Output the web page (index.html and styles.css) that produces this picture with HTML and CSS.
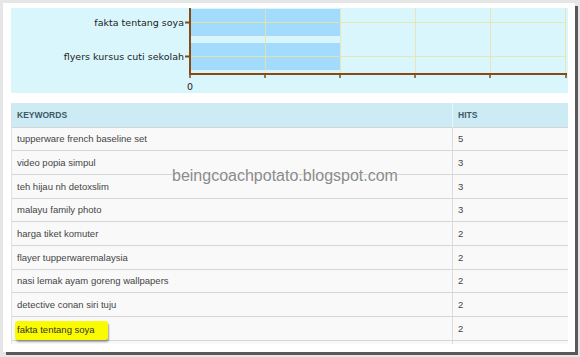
FILE: index.html
```html
<!DOCTYPE html>
<html lang="en">
<head>
  <meta charset="UTF-8" />
  <meta name="viewport" content="width=device-width, initial-scale=1.0"/>
  <title>Keywords report</title>
  <link rel="stylesheet" href="styles.css">
</head>
<body>

<div class="frame">

  <div class="chart">
    <svg viewBox="0 0 557 85" width="557" height="85">
      <!-- bars -->
      <rect class="bar" x="180" y="1" width="149" height="27" />
      <rect class="bar" x="180" y="35" width="149" height="27" />

      <!-- grid -->
      <g class="grid">
        <line x1="254.5" y1="0" x2="254.5" y2="65" />
        <line x1="329.5" y1="0" x2="329.5" y2="65" />
        <line x1="404.5" y1="0" x2="404.5" y2="65" />
        <line x1="479.5" y1="0" x2="479.5" y2="65" />
        <line x1="554.5" y1="0" x2="554.5" y2="65" />
        <line x1="180" y1="14.5" x2="555" y2="14.5" />
        <line x1="180" y1="48.5" x2="555" y2="48.5" />
      </g>

      <!-- axes -->
      <g class="axis">
        <line x1="179" y1="0" x2="179" y2="67" />
        <line x1="178" y1="66" x2="556" y2="66" />
        <line x1="174" y1="14.5" x2="179" y2="14.5" />
        <line x1="174" y1="48.5" x2="179" y2="48.5" />
      </g>
      <g class="ticks">
        <line x1="179" y1="66" x2="179" y2="70" />
        <line x1="254" y1="66" x2="254" y2="70" />
        <line x1="329" y1="66" x2="329" y2="70" />
        <line x1="404" y1="66" x2="404" y2="70" />
        <line x1="479" y1="66" x2="479" y2="70" />
        <line x1="555" y1="66" x2="555" y2="70" />
      </g>

      <text class="label" x="173" y="18">fakta tentang soya</text>
      <text class="label" x="173" y="52">flyers kursus cuti sekolah</text>
      <text class="label zero" x="179" y="82">0</text>
    </svg>
  </div>

  <div class="table-wrap">
    <table class="keywords">
      <thead>
        <tr><th>KEYWORDS</th><th class="hits">HITS</th></tr>
      </thead>
      <tbody>
        <tr><td>tupperware french baseline set</td><td class="hits">5</td></tr>
        <tr><td>video popia simpul</td><td class="hits">3</td></tr>
        <tr><td>teh hijau nh detoxslim</td><td class="hits">3</td></tr>
        <tr><td>malayu family photo</td><td class="hits">3</td></tr>
        <tr><td>harga tiket komuter</td><td class="hits">2</td></tr>
        <tr><td>flayer tupperwaremalaysia</td><td class="hits">2</td></tr>
        <tr><td>nasi lemak ayam goreng wallpapers</td><td class="hits">2</td></tr>
        <tr><td>detective conan siri tuju</td><td class="hits">2</td></tr>
        <tr><td><span class="marker">fakta tentang soya</span></td><td class="hits">2</td></tr>
        <tr><td>&nbsp;</td><td class="hits">&nbsp;</td></tr>
      </tbody>
    </table>
  </div>

  <div class="watermark">beingcoachpotato.blogspot.com</div>

</div>

</body>
</html>
```

FILE: styles.css
```css
* {
  margin: 0;
  padding: 0;
  box-sizing: border-box;
}

body {
  width: 580px;
  height: 357px;
  background: #e6e6e6;
  font-family: 'Liberation Sans', Arial, sans-serif;
  overflow: hidden;
}

.frame {
  position: relative;
  margin: 3px;
  width: 572px;
  height: 349px;
  padding: 5px 7px 8px 8px;
  background: #fff;
  box-shadow: 3px 3px 0 #595959;
  display: flex;
  flex-direction: column;
  gap: 10px;
}

/* bar chart */
.chart {
  height: 85px;
  background: #d9f6fd;
}

.chart svg {
  display: block;
}

.bar { fill: #a3dbfc; }

.grid line {
  stroke: #eee2a6;
  stroke-width: 1;
  opacity: 0.8;
}

.axis line {
  stroke: #874a14;
  stroke-width: 2;
}

.ticks line {
  stroke: #874a14;
  stroke-width: 1.5;
}

.label {
  font-family: 'DejaVu Sans', Verdana, sans-serif;
  font-size: 9.5px;
  fill: #222;
  text-anchor: end;
}

.label.zero { text-anchor: middle; }

/* keyword table */
.table-wrap {
  flex: 1;
  overflow: hidden;
}

.keywords {
  width: 557px;
  border-collapse: separate;
  border-spacing: 0;
  background: #f9f9f9;
  border-left: 1px solid #e2e2e2;
  font-size: 9.5px;
  color: #454545;
}

.keywords th {
  height: 24.5px;
  padding: 0 5px;
  text-align: left;
  background: #cdebf4;
  color: #3d5866;
  font-size: 8.5px;
  font-weight: bold;
  border-bottom: 1px solid #d4d4d4;
}

.keywords td {
  height: 23.7px;
  padding: 0 5px;
  border-bottom: 1px solid #d6d6d6;
}

.keywords .hits {
  width: 116px;
  border-left: 1px solid #dcdcdc;
}

.keywords th.hits {
  border-left-color: #e6f5fa;
}

.marker {
  display: inline-block;
  margin: 4px 0 0 -2px;
  padding: 3px 13px 5px 2px;
  background: #fbfb00;
  border-radius: 3px;
  box-shadow: 1px 2px 2px rgba(0, 0, 0, 0.35);
  color: #333;
}

.watermark {
  position: absolute;
  left: 169px;
  top: 165px;
  font-size: 16px;
  line-height: 1;
  color: #8a8a8a;
  text-shadow: 0 0 2px #fff, 0 0 2px #fff;
}
```
